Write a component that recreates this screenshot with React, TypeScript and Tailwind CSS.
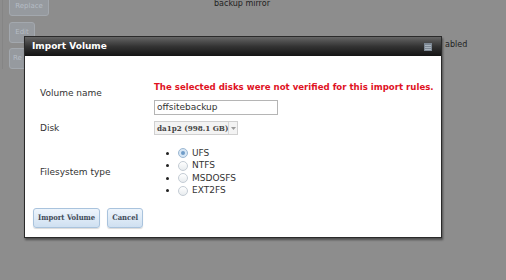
import React from "react";

const fsTypes = ["UFS", "NTFS", "MSDOSFS", "EXT2FS"];

const sans = { fontFamily: '"DejaVu Sans", Verdana, sans-serif' };
const serif = { fontFamily: '"DejaVu Serif Condensed", "DejaVu Serif", "Liberation Serif", serif' };

const Radio: React.FC<{ checked?: boolean }> = ({ checked }) => (
  <span
    className={
      "flex h-[10px] w-[10px] items-center justify-center rounded-full border " +
      (checked
        ? "border-[#9db8d2] bg-[#d6e6f5]"
        : "border-[#c4ccd4] bg-gradient-to-b from-[#ffffff] to-[#e8ecef]")
    }
  >
    {checked && <span className="h-[4px] w-[4px] rounded-full bg-[#6f9cc8]" />}
  </span>
);

const DialogButton: React.FC<{ label: string }> = ({ label }) => (
  <button
    className="h-[20px] whitespace-nowrap rounded-[3px] border border-[#a9c3dd] bg-gradient-to-b from-[#eef5fc] to-[#cfe0f1] px-[4px] text-[7.6px] font-bold text-[#3f4a57] shadow-[0_1px_1px_rgba(0,0,0,0.15)]"
    style={serif}
  >
    {label}
  </button>
);

export default function App() {
  return (
    <div className="relative h-[280px] w-[506px] overflow-hidden bg-[#8d8d8d]" style={sans}>
      {/* page behind the overlay */}
      <div className="flex">
        <div className="ml-[2px] flex w-[50px] flex-col gap-[5px] border-l border-[#858585] pl-[6px]">
          <div className="-mt-[4px] flex h-[20px] w-[40px] items-center justify-center rounded-[3px] border border-[#a3a8ae] bg-[#969a9f] text-[7px] text-[#b5bcc5]">
            Replace
          </div>
          <div className="mt-[1px] flex h-[21px] w-[26px] items-center justify-center rounded-[3px] border border-[#a3a8ae] bg-[#969a9f] text-[7px] text-[#b5bcc5]">
            Edit
          </div>
          <div className="flex h-[21px] w-[30px] items-center rounded-[3px] border border-[#a3a8ae] bg-[#969a9f] pl-[3px] text-[7px] text-[#b5bcc5]">
            Re
          </div>
        </div>
        <div className="relative flex-1">
          <div className="absolute left-[162px] top-[-1px] text-[8px] leading-[9px] text-[#222]">backup mirror</div>
          <div className="absolute left-[393px] top-[39px] text-[8px] text-[#222]">abled</div>
        </div>
      </div>

      {/* dialog */}
      <div className="absolute left-[24px] top-[36px] w-[418px] border border-[#2a2a2a] bg-white shadow-[1px_2px_2px_rgba(0,0,0,0.45)]">
        <div className="flex h-[19px] items-center justify-between bg-gradient-to-b from-[#666666] via-[#333333] to-[#141414] pl-[7px] pr-[9px]">
          <span className="text-[9px] font-bold text-white">Import Volume</span>
          <svg width="8" height="8" viewBox="0 0 8 8">
            <rect x="0" y="0" width="8" height="8" fill="#7d8894" />
            <rect x="1" y="2" width="6" height="1" fill="#a9b3bd" />
            <rect x="1" y="4" width="6" height="1" fill="#a9b3bd" />
            <rect x="1" y="6" width="6" height="1" fill="#a9b3bd" />
          </svg>
        </div>

        <div className="px-[8px] pb-[9px] pt-[25px]">
          <div className="grid grid-cols-[114px_1fr] pl-[7px] text-[9px] text-[#333]">
            <div className="mt-[6px] self-start leading-[12px]">Volume name</div>
            <div className="flex flex-col items-start">
              <div className="whitespace-nowrap text-[8.6px] font-bold leading-[12px] text-[#e0121f]">
                The selected disks were not verified for this import rules.
              </div>
              <div className="mt-[7px] flex h-[15px] w-[124px] items-center border border-[#b5b5b5] px-[2px] text-[9px] text-[#333]">
                offsitebackup
              </div>
            </div>

            <div className="mt-[6px] self-center leading-[12px]">Disk</div>
            <div className="mt-[6px] flex h-[14px] w-[84px] items-stretch border border-[#d0d0d0] bg-[#f3f3f3]">
              <span
                className="flex flex-1 items-center whitespace-nowrap pl-[2px] text-[8px] font-bold text-[#444]"
                style={serif}
              >
                da1p2 (998.1 GB)
              </span>
              <span className="flex w-[11px] items-center justify-center border-l border-[#d8d8d8]">
                <svg width="5" height="3" viewBox="0 0 5 3">
                  <path d="M0 0 L5 0 L2.5 3 Z" fill="#9a9a9a" />
                </svg>
              </span>
            </div>

            <div className="mt-[12px] self-center leading-[12px]">Filesystem type</div>
            <ul className="mt-[12px] flex flex-col">
              {fsTypes.map((t, i) => (
                <li key={t} className="flex h-[12.5px] items-center pl-[12px]">
                  <span className="h-[3px] w-[3px] rounded-full bg-[#222]" />
                  <span className="ml-[9px]">
                    <Radio checked={i === 0} />
                  </span>
                  <span className="ml-[4px] text-[9px] text-[#333]">{t}</span>
                </li>
              ))}
            </ul>
          </div>

          <div className="mt-[11px] flex gap-[7px]">
            <DialogButton label="Import Volume" />
            <DialogButton label="Cancel" />
          </div>
        </div>
      </div>
    </div>
  );
}
